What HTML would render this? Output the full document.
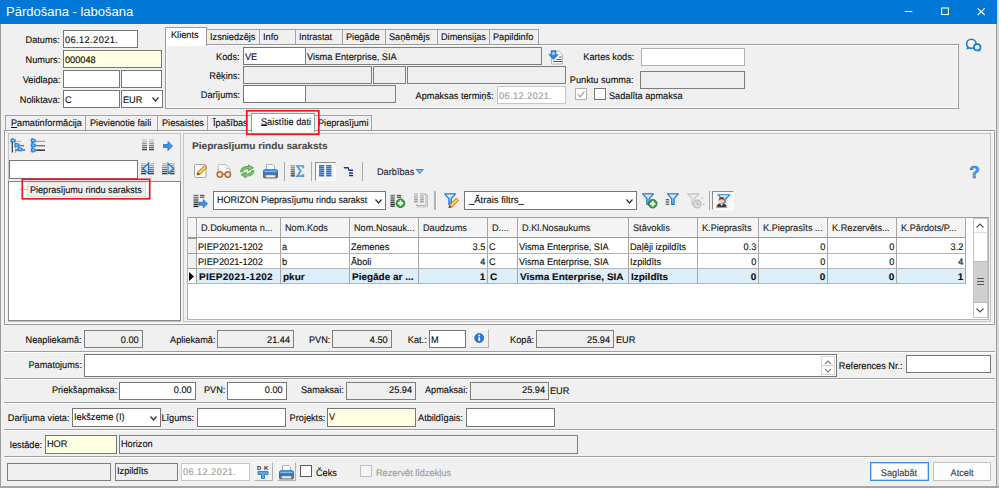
<!DOCTYPE html>
<html lang="lv"><head><meta charset="utf-8"><title>Pārdošana - labošana</title>
<style>
html,body{margin:0;padding:0}
body{width:999px;height:488px;overflow:hidden;position:relative;background:#f0f0f0;font-family:"Liberation Sans",sans-serif;font-size:11px;color:#111}
.a,.f,.t,.pn,.pn2,.tab,.cb,.btn,.red{position:absolute;box-sizing:border-box}
.f{background:#fff;border:1px solid #767676}
.f.g{background:#efefef;border-color:#7e7e7e}
.f.y{background:#ffffe1}
.f.d{background:#fff;border-color:#c6c6c6}
.t{white-space:nowrap;font-size:9.6px;margin-top:.7px;color:#0c0c0c;-webkit-text-stroke:.12px currentColor}
.t.b{font-weight:bold}
.t.dis{color:#9b9b9b}
.pn{border:1px solid #9a9a9a;background:#f0f0f0;box-shadow:inset 0 0 0 1px #fcfcfc}
.pn2{border:1px solid #c4c4c4;background:#f0f0f0}
.tab{border:1px solid #a3a3a3;border-bottom:none;background:#f0f0f0}
.tab.sel{background:#fff;border-color:#9a9a9a}
.cb{background:#fff;border:1px solid #5a5a5a}
.btn{background:#f0f0f0;border:1px solid;border-color:#fdfdfd #b2b2b2 #b2b2b2 #fdfdfd}
.btn2{position:absolute;box-sizing:border-box;background:#fdfdfd;border:1px solid #c2c2c2}
.red{border:2px solid #e8161f;background:none;z-index:9}
svg{overflow:visible}
</style></head>
<body>
<div class="a" style="left:0;top:0;width:999px;height:488px;background:#f0f0f0"></div>
<div class="a" style="left:0;top:0;width:999px;height:24px;background:#0078d7"></div>
<div class="a" style="left:6px;top:0;line-height:24px;font-size:13px;color:#fff;white-space:nowrap">Pārdošana - labošana</div>
<svg class="a" style="left:905px;top:11px" width="8" height="2" viewBox="0 0 8 2"><rect x="0" y="0" width="7.300" height="1" fill="#fff"/></svg>
<svg class="a" style="left:941px;top:7px" width="9" height="9" viewBox="0 0 9 9"><rect x=".6" y="1" width="6.800" height="6.500" fill="none" stroke="#fff" stroke-width="1.100"/></svg>
<svg class="a" style="left:977px;top:8px" width="9" height="8" viewBox="0 0 9 8"><path d="M.7 .4L7.700 7M7.700 .4L.7 7" stroke="#fff" stroke-width="1.150" fill="none"/></svg>
<div class="a" style="left:0;top:24px;width:1px;height:464px;background:#9c9c9c"></div>
<div class="a" style="left:997px;top:0;width:2px;height:488px;background:#dadada"></div>
<div class="a" style="left:996px;top:24px;width:1px;height:464px;background:#9a9a9a"></div>
<div class="a" style="left:0;top:486px;width:999px;height:2px;background:#a6a6a6"></div>
<div class="t" style="right:939px;top:30px;line-height:18px;transform:scaleX(0.957) rotate(.03deg);transform-origin:100% 0;">Datums:</div>
<div class="t" style="right:939px;top:50px;line-height:18px;transform:scaleX(0.957) rotate(.03deg);transform-origin:100% 0;">Numurs:</div>
<div class="t" style="right:939px;top:70px;line-height:18px;transform:scaleX(0.957) rotate(.03deg);transform-origin:100% 0;">Veidlapa:</div>
<div class="t" style="right:939px;top:90px;line-height:18px;transform:scaleX(0.957) rotate(.03deg);transform-origin:100% 0;">Noliktava:</div>
<div class="f" style="left:63px;top:30px;width:75px;height:18px;"></div>
<div class="t" style="left:65px;top:30px;line-height:18px;transform:scaleX(0.957) rotate(.03deg);transform-origin:0 0;letter-spacing:.45px">06.12.2021.</div>
<div class="f y" style="left:63px;top:50px;width:99px;height:18px;"></div>
<div class="t" style="left:65px;top:50px;line-height:18px;transform:scaleX(0.957) rotate(.03deg);transform-origin:0 0;">000048</div>
<div class="f" style="left:63px;top:70px;width:57px;height:18px;"></div>
<div class="f" style="left:121px;top:70px;width:41px;height:18px;"></div>
<div class="f" style="left:63px;top:90px;width:57px;height:18px;"></div>
<div class="t" style="left:65px;top:90px;line-height:18px;transform:scaleX(0.957) rotate(.03deg);transform-origin:0 0;">C</div>
<div class="f" style="left:121px;top:90px;width:42px;height:18px;"></div>
<div class="t" style="left:123px;top:90px;line-height:18px;transform:scaleX(0.957) rotate(.03deg);transform-origin:0 0;">EUR</div>
<svg class="a" style="left:152px;top:97px" width="7" height="5" viewBox="0 0 7 5"><path d="M0.5 0.5 L3.5 4 L6.5 0.5" fill="none" stroke="#333" stroke-width="1.3"/></svg>
<div class="pn" style="left:165px;top:44px;width:794px;height:65px;"></div>
<div class="tab" style="left:206px;top:29px;width:54px;height:15px;"></div>
<div class="t" style="left:210px;top:28px;line-height:15px;transform:scaleX(0.957) rotate(.03deg);transform-origin:0 0;">Izsniedzējs</div>
<div class="tab" style="left:259px;top:29px;width:37px;height:15px;"></div>
<div class="t" style="left:263px;top:28px;line-height:15px;transform:scaleX(0.957) rotate(.03deg);transform-origin:0 0;">Info</div>
<div class="tab" style="left:295px;top:29px;width:48px;height:15px;"></div>
<div class="t" style="left:299px;top:28px;line-height:15px;transform:scaleX(0.957) rotate(.03deg);transform-origin:0 0;">Intrastat</div>
<div class="tab" style="left:342px;top:29px;width:44px;height:15px;"></div>
<div class="t" style="left:346px;top:28px;line-height:15px;transform:scaleX(0.957) rotate(.03deg);transform-origin:0 0;">Piegāde</div>
<div class="tab" style="left:385px;top:29px;width:53px;height:15px;"></div>
<div class="t" style="left:389px;top:28px;line-height:15px;transform:scaleX(0.957) rotate(.03deg);transform-origin:0 0;">Saņēmējs</div>
<div class="tab" style="left:437px;top:29px;width:53px;height:15px;"></div>
<div class="t" style="left:441px;top:28px;line-height:15px;transform:scaleX(0.957) rotate(.03deg);transform-origin:0 0;">Dimensijas</div>
<div class="tab" style="left:489px;top:29px;width:50px;height:15px;"></div>
<div class="t" style="left:493px;top:28px;line-height:15px;transform:scaleX(0.957) rotate(.03deg);transform-origin:0 0;">Papildinfo</div>
<div class="tab sel" style="left:165px;top:27px;width:42px;height:19px;"></div>
<div class="t" style="left:171px;top:25.5px;line-height:17px;transform:scaleX(0.957) rotate(.03deg);transform-origin:0 0;">Klients</div>
<div class="t" style="right:759px;top:47px;line-height:18px;transform:scaleX(0.957) rotate(.03deg);transform-origin:100% 0;">Kods:</div>
<div class="t" style="right:759px;top:66px;line-height:18px;transform:scaleX(0.957) rotate(.03deg);transform-origin:100% 0;">Rēķins:</div>
<div class="t" style="right:759px;top:85px;line-height:18px;transform:scaleX(0.957) rotate(.03deg);transform-origin:100% 0;">Darījums:</div>
<div class="f" style="left:243px;top:47px;width:63px;height:18px;"></div>
<div class="t" style="left:245px;top:47px;line-height:18px;transform:scaleX(0.957) rotate(.03deg);transform-origin:0 0;">VE</div>
<div class="f g" style="left:305px;top:47px;width:237px;height:18px;"></div>
<div class="t" style="left:307px;top:47px;line-height:18px;transform:scaleX(0.957) rotate(.03deg);transform-origin:0 0;">Visma Enterprise, SIA</div>
<div class="f g" style="left:243px;top:66px;width:129px;height:18px;"></div>
<div class="f g" style="left:373px;top:66px;width:33px;height:18px;"></div>
<div class="f g" style="left:407px;top:66px;width:159px;height:18px;"></div>
<div class="f" style="left:243px;top:85px;width:63px;height:18px;"></div>
<div class="f g" style="left:305px;top:85px;width:91px;height:18px;"></div>
<div class="t" style="right:505px;top:86px;line-height:18px;transform:scaleX(0.957) rotate(.03deg);transform-origin:100% 0;">Apmaksas termiņš:</div>
<div class="f d" style="left:497px;top:86px;width:69px;height:18px;"></div>
<div class="t dis" style="left:499px;top:86px;line-height:18px;transform:scaleX(0.957) rotate(.03deg);transform-origin:0 0;letter-spacing:.45px">06.12.2021.</div>
<div class="t" style="right:365px;top:47px;line-height:18px;transform:scaleX(0.957) rotate(.03deg);transform-origin:100% 0;">Kartes kods:</div>
<div class="t" style="right:365px;top:70px;line-height:18px;transform:scaleX(0.957) rotate(.03deg);transform-origin:100% 0;">Punktu summa:</div>
<div class="f" style="left:641px;top:48px;width:104px;height:18px;border-color:#b2b2b2"></div>
<div class="f g" style="left:640px;top:71px;width:105px;height:18px;"></div>
<div class="cb" style="left:575px;top:88px;width:12px;height:12px;border-color:#b0b0b0"></div>
<svg class="a" style="left:577px;top:90px" width="9" height="9" viewBox="0 0 9 9"><path d="M1 4.300L3.300 6.800L7.500 1.300" fill="none" stroke="#9a9a9a" stroke-width="1.100"/></svg>
<div class="cb" style="left:594px;top:88px;width:12px;height:12px;border-color:#777"></div>
<div class="t" style="left:609px;top:86px;line-height:18px;transform:scaleX(0.957) rotate(.03deg);transform-origin:0 0;">Sadalīta apmaksa</div>
<svg class="a" style="left:548px;top:50px" width="16" height="15" viewBox="0 0 16 15"><path d="M3.500 1h7.500l3.500 3.500v9.500h-11z" fill="#fcfcfc" stroke="#b4b4b4" stroke-width="1"/><path d="M5 11.500h9M8.500 9.500h5M11 7h2.500" stroke="#555" stroke-width="1.100"/><path d="M3 .8h5v3.700h2.200l-4.700 5.300l-4.700-5.300h2.200z" fill="#2f86dc" stroke="#1f6fc4" stroke-width=".6"/><path d="M4.200 2h2.600v3h-2.600z" fill="#9fd0fb"/></svg>
<svg class="a" style="left:966px;top:38px" width="16" height="14" viewBox="0 0 16 14"><ellipse cx="5.300" cy="5.700" rx="4.700" ry="4.500" fill="none" stroke="#1a7ad4" stroke-width="1.600"/><path d="M1.300 8.300l-1 3.200l4.200-1.300z" fill="#1a7ad4"/><ellipse cx="11.200" cy="9.300" rx="3.300" ry="3.200" fill="#f0f0f0" stroke="#1a7ad4" stroke-width="1.600"/><path d="M13 11.600l2 1.900l-4-.6z" fill="#1a7ad4"/></svg>
<div class="pn" style="left:4px;top:130px;width:991px;height:195px;"></div>
<div class="tab" style="left:5px;top:115px;width:81px;height:15px;"></div>
<div class="t" style="left:11px;top:114.5px;line-height:15px;transform:scaleX(0.957) rotate(.03deg);transform-origin:0 0;">Pamatinformācija</div>
<div class="tab" style="left:85px;top:115px;width:73px;height:15px;"></div>
<div class="t" style="left:90px;top:114.5px;line-height:15px;transform:scaleX(0.957) rotate(.03deg);transform-origin:0 0;">Pievienotie faili</div>
<div class="tab" style="left:157px;top:115px;width:51px;height:15px;"></div>
<div class="t" style="left:162px;top:114.5px;line-height:15px;transform:scaleX(0.957) rotate(.03deg);transform-origin:0 0;">Piesaistes</div>
<div class="tab" style="left:207px;top:115px;width:45px;height:15px;"></div>
<div class="t" style="left:213px;top:114.5px;line-height:15px;transform:scaleX(0.957) rotate(.03deg);transform-origin:0 0;">Īpašības</div>
<div class="tab" style="left:313px;top:115px;width:59px;height:15px;"></div>
<div class="t" style="left:318px;top:114.5px;line-height:15px;transform:scaleX(0.957) rotate(.03deg);transform-origin:0 0;">Pieprasījumi</div>
<div class="tab sel" style="left:251px;top:113px;width:64px;height:19px;"></div>
<div class="t" style="left:261px;top:112px;line-height:18px;transform:scaleX(0.957) rotate(.03deg);transform-origin:0 0;">Saistītie dati</div>
<div class="a" style="left:11px;top:126.500px;width:5.500px;height:1px;background:#111"></div>
<div class="a" style="left:261px;top:124.500px;width:5.500px;height:1px;background:#111;z-index:3"></div>
<svg class="a" style="left:0;top:0;z-index:9;pointer-events:none" width="999" height="488"><rect x="246.800" y="110.800" width="72" height="23.500" fill="none" stroke="#ea1620" stroke-width="1.700"/><rect x="22.300" y="179.300" width="127.400" height="19.500" fill="none" stroke="#ea1620" stroke-width="1.700"/></svg>
<div class="pn2" style="left:8px;top:133px;width:173px;height:189px;"></div>
<svg class="a" style="left:10px;top:138px" width="16" height="15" viewBox="0 0 16 15"><path d="M2.300 4v10.500" stroke="#222" stroke-width="1.100"/><path d="M5.700 8.500v6" stroke="#555" stroke-width="1" stroke-dasharray="1.500 1"/><path d="M6.500 3.300h4.500" stroke="#aaa" stroke-width="1"/><path d="M9.700 7.700h4.300" stroke="#777" stroke-width="1.500"/><path d="M5.700 12h2M13 12h2" stroke="#555" stroke-width="1.300"/><path d="M0.8 1.3l.7-.8h1.600l.7.800h1.600v3h-4.600z" fill="#2f86dc" stroke="#2a7fd6" stroke-width=".5"/><rect x="1.9000000000000001" y="2.0" width="2.200" height=".9" fill="#bfe0fb"/><path d="M4.7 5.8l.7-.8h1.600l.7.800h1.600v3h-4.600z" fill="#2f86dc" stroke="#2a7fd6" stroke-width=".5"/><rect x="5.800000000000001" y="6.5" width="2.200" height=".9" fill="#bfe0fb"/><path d="M7.7 10.100000000000001l.7-.8h1.600l.7.800h1.600v3h-4.600z" fill="#2f86dc" stroke="#2a7fd6" stroke-width=".5"/><rect x="8.8" y="10.8" width="2.200" height=".9" fill="#bfe0fb"/></svg>
<svg class="a" style="left:30px;top:138px" width="16" height="15" viewBox="0 0 16 15"><path d="M6.200 3.300h8.800" stroke="#9a9a9a" stroke-width="1.100"/><path d="M6.200 7.700h8.800" stroke="#6a6a6a" stroke-width="1.300"/><path d="M6.200 12.200h8.800" stroke="#333" stroke-width="1.500"/><path d="M2.300 3v11.500" stroke="#333" stroke-width="1"/><path d="M1 1.3l.7-.8h1.600l.7.800h1.600v3h-4.600z" fill="#2f86dc" stroke="#2a7fd6" stroke-width=".5"/><rect x="2.1" y="2.0" width="2.200" height=".9" fill="#bfe0fb"/><path d="M1 6.0l.7-.8h1.600l.7.800h1.600v3h-4.600z" fill="#2f86dc" stroke="#2a7fd6" stroke-width=".5"/><rect x="2.1" y="6.7" width="2.200" height=".9" fill="#bfe0fb"/><path d="M1 10.8l.7-.8h1.600l.7.800h1.600v3h-4.600z" fill="#2f86dc" stroke="#2a7fd6" stroke-width=".5"/><rect x="2.1" y="11.5" width="2.200" height=".9" fill="#bfe0fb"/></svg>
<svg class="a" style="left:141px;top:138px" width="14" height="14" viewBox="0 0 14 14"><rect x="1" y="1" width="5" height="1.3" fill="rgb(205,205,205)"/><rect x="1" y="3" width="5" height="1.3" fill="rgb(178,178,178)"/><rect x="1" y="5" width="5" height="1.3" fill="rgb(151,151,151)"/><rect x="1" y="7" width="5" height="1.3" fill="rgb(124,124,124)"/><rect x="1" y="9" width="5" height="1.3" fill="rgb(97,97,97)"/><rect x="1" y="11" width="5" height="1.3" fill="rgb(70,70,70)"/><rect x="8" y="1" width="5" height="1.3" fill="rgb(205,205,205)"/><rect x="8" y="3" width="5" height="1.3" fill="rgb(178,178,178)"/><rect x="8" y="5" width="5" height="1.3" fill="rgb(151,151,151)"/><rect x="8" y="7" width="5" height="1.3" fill="rgb(124,124,124)"/><rect x="8" y="9" width="5" height="1.3" fill="rgb(97,97,97)"/><rect x="8" y="11" width="5" height="1.3" fill="rgb(70,70,70)"/></svg>
<svg class="a" style="left:163px;top:141px" width="10" height="10" viewBox="0 0 10 10"><path d="M0.5 3.5h4.5v-3l4.5 4.5l-4.5 4.5v-3h-4.5z" fill="#3d93e6" stroke="#1f6fc4" stroke-width=".8"/></svg>
<div class="f" style="left:9px;top:160px;width:129px;height:19px;"></div>
<svg class="a" style="left:141px;top:162px" width="14" height="14" viewBox="0 0 14 14"><rect x="0" y="1" width="5" height="1.3" fill="rgb(190,190,190)"/><rect x="0" y="3" width="5" height="1.3" fill="rgb(164,164,164)"/><rect x="0" y="5" width="5" height="1.3" fill="rgb(138,138,138)"/><rect x="0" y="7" width="5" height="1.3" fill="rgb(112,112,112)"/><rect x="0" y="9" width="5" height="1.3" fill="rgb(86,86,86)"/><rect x="0" y="11" width="5" height="1.3" fill="rgb(60,60,60)"/><rect x="8" y="1" width="5" height="1.3" fill="rgb(190,190,190)"/><rect x="8" y="3" width="5" height="1.3" fill="rgb(164,164,164)"/><rect x="8" y="5" width="5" height="1.3" fill="rgb(138,138,138)"/><rect x="8" y="7" width="5" height="1.3" fill="rgb(112,112,112)"/><rect x="8" y="9" width="5" height="1.3" fill="rgb(86,86,86)"/><rect x="8" y="11" width="5" height="1.3" fill="rgb(60,60,60)"/><path d="M7.500 1.300v10.400L2 6.500z" fill="#cfe6fb" stroke="#1f6fc4" stroke-width="1.100"/></svg>
<svg class="a" style="left:161px;top:162px" width="14" height="14" viewBox="0 0 14 14"><rect x="1" y="1" width="5" height="1.3" fill="rgb(190,190,190)"/><rect x="1" y="3" width="5" height="1.3" fill="rgb(164,164,164)"/><rect x="1" y="5" width="5" height="1.3" fill="rgb(138,138,138)"/><rect x="1" y="7" width="5" height="1.3" fill="rgb(112,112,112)"/><rect x="1" y="9" width="5" height="1.3" fill="rgb(86,86,86)"/><rect x="1" y="11" width="5" height="1.3" fill="rgb(60,60,60)"/><rect x="8.5" y="1" width="5" height="1.3" fill="rgb(190,190,190)"/><rect x="8.5" y="3" width="5" height="1.3" fill="rgb(164,164,164)"/><rect x="8.5" y="5" width="5" height="1.3" fill="rgb(138,138,138)"/><rect x="8.5" y="7" width="5" height="1.3" fill="rgb(112,112,112)"/><rect x="8.5" y="9" width="5" height="1.3" fill="rgb(86,86,86)"/><rect x="8.5" y="11" width="5" height="1.3" fill="rgb(60,60,60)"/><path d="M7 1.300v10.400l5.500-5.200z" fill="#cfe6fb" stroke="#1f6fc4" stroke-width="1.100"/></svg>
<div class="f" style="left:8px;top:181px;width:173px;height:140px;border-color:#828790"></div>
<div class="a" style="left:20px;top:189px;width:7px;height:0;border-top:1px dotted #999"></div>
<div class="a" style="left:27px;top:182px;width:119px;height:15px;background:#efefef;border:1px solid #dcdcdc;box-sizing:border-box"></div>
<div class="t" style="left:29.5px;top:181px;line-height:15px;transform:scaleX(0.957) rotate(.03deg);transform-origin:0 0;transform:scaleX(.945) rotate(.03deg)">Pieprasījumu rindu saraksts</div>
<div class="pn2" style="left:183px;top:133px;width:808px;height:189px;"></div>
<div class="t b" style="left:192px;top:137px;line-height:16px;transform:scaleX(1.04) rotate(.03deg);transform-origin:0 0;color:#4b4b4b;transform:scaleX(1.055) rotate(.03deg)">Pieprasījumu rindu saraksts</div>
<svg class="a" style="left:194px;top:164px" width="15" height="15" viewBox="0 0 15 15"><rect x=".5" y=".5" width="11.500" height="13" rx="1.200" fill="#fcfcfc" stroke="#a4a4a4"/><g transform="translate(3,1.500)"><path d="M0 9.500l.9-3.100l6.600-6.400l2.300 2.300l-6.600 6.400z" fill="#f7bd3a" stroke="#c56a18" stroke-width=".9"/><path d="M0 9.500l.8-2.600l1.900 1.900z" fill="#5a2d0c"/><path d="M2.500 7.300l5.500-5.400" stroke="#fde9a0" stroke-width=".9"/></g></svg>
<svg class="a" style="left:215px;top:164px" width="18" height="15" viewBox="0 0 18 15"><path d="M3.200 10v-9.500h7.800l4 4v5.500" fill="#fbfbfb" stroke="#bdbdbd"/><path d="M11 .5v4h4" fill="none" stroke="#cfcfcf"/><circle cx="4.800" cy="10.500" r="2.700" fill="#dbe7f3" stroke="#c7651a" stroke-width="1.500"/><circle cx="12.800" cy="10.500" r="2.700" fill="#dbe7f3" stroke="#c7651a" stroke-width="1.500"/><path d="M7.800 10.200h2" stroke="#c7651a" stroke-width="1.500"/></svg>
<svg class="a" style="left:240px;top:164px" width="15" height="15" viewBox="0 0 15 15"><path d="M1.700 8.300C1.800 4.600 5 3.200 9 3.700" stroke="#4f9e45" stroke-width="3.200" fill="none"/><path d="M8.200 .2l5.800 3.600l-5.800 3.500z" fill="#4f9e45"/><path d="M1.700 8.300C1.800 4.600 5 3.200 9 3.700" stroke="#7cc66e" stroke-width="1.800" fill="none"/><path d="M8.900 1.600l3.600 2.200l-3.600 2.100z" fill="#7cc66e"/><g transform="rotate(180 7.250 7.300)"><path d="M1.700 8.300C1.800 4.600 5 3.200 9 3.700" stroke="#4f9e45" stroke-width="3.200" fill="none"/><path d="M8.200 .2l5.800 3.600l-5.800 3.500z" fill="#4f9e45"/><path d="M1.700 8.300C1.800 4.600 5 3.200 9 3.700" stroke="#7cc66e" stroke-width="1.800" fill="none"/><path d="M8.900 1.600l3.600 2.200l-3.600 2.100z" fill="#7cc66e"/></g></svg>
<svg class="a" style="left:263px;top:164px" width="15" height="15" viewBox="0 0 15 15"><path d="M3.500 .5h6.500l1.500 1.500v4.500h-8z" fill="#fafcfe" stroke="#aab4bf"/><path d="M.5 7.200q0-1.500 1.500-1.500h11q1.500 0 1.500 1.500v3.300h-14z" fill="#2f86dc" stroke="#1b5fa8" stroke-width=".8"/><path d="M1.500 7.300h12" stroke="#8cc6f5" stroke-width="1.200"/><path d="M.5 10h14v3q0 1-1 1h-12q-1 0-1-1z" fill="#6b7888" stroke="#4d5866" stroke-width=".8"/><path d="M2.800 11h9.400v2.500h-9.400z" fill="#e9eef3" stroke="#8b97a4" stroke-width=".6"/></svg>
<div class="a" style="left:284px;top:162px;width:1px;height:19px;background:#a8a8a8"></div>
<svg class="a" style="left:290px;top:165px" width="15" height="13" viewBox="0 0 15 13"><rect x="0.7" y="0.2" width="4.3" height="1.3" fill="rgb(150,150,150)"/><rect x="0.7" y="2.2" width="4.3" height="1.3" fill="rgb(130,130,130)"/><rect x="0.7" y="4.2" width="4.3" height="1.3" fill="rgb(110,110,110)"/><rect x="0.7" y="6.2" width="4.3" height="1.3" fill="rgb(90,90,90)"/><rect x="0.7" y="8.2" width="4.3" height="1.3" fill="rgb(70,70,70)"/><rect x="0.7" y="10.2" width="4.3" height="1.3" fill="rgb(50,50,50)"/><path d="M13.300 3.300V1H7.200l3.500 5.100L7.200 11.200h6.100V8.900" fill="none" stroke="#2f82d8" stroke-width="1.700" stroke-linejoin="miter"/><path d="M13.300 3.300V1H7.200l3.500 5.100L7.200 11.200h6.100V8.900" fill="none" stroke="#a6d0f7" stroke-width=".5"/></svg>
<div class="a" style="left:311px;top:162px;width:1px;height:19px;background:#a8a8a8"></div>
<div class="a" style="left:315px;top:162px;width:21px;height:19px;background:#f7f7f7;border:1px solid;border-color:#8e8e8e #fff #fff #8e8e8e;box-sizing:border-box"></div>
<svg class="a" style="left:319px;top:165px" width="13" height="13" viewBox="0 0 13 13"><rect x="0" y="0" width="5.2" height="11.4" fill="#b9d3f1"/><rect x="0" y="0" width="5.2" height="1.400" fill="#2a6cc4"/><rect x="0" y="2" width="5.2" height="1.400" fill="#2a6cc4"/><rect x="0" y="4" width="5.2" height="1.400" fill="#2a6cc4"/><rect x="0" y="6" width="5.2" height="1.400" fill="#2a6cc4"/><rect x="0" y="8" width="5.2" height="1.400" fill="#2a6cc4"/><rect x="0" y="10" width="5.2" height="1.400" fill="#2a6cc4"/><rect x="7.2" y="0" width="5.2" height="11.4" fill="#b9d3f1"/><rect x="7.2" y="0" width="5.2" height="1.400" fill="#2a6cc4"/><rect x="7.2" y="2" width="5.2" height="1.400" fill="#2a6cc4"/><rect x="7.2" y="4" width="5.2" height="1.400" fill="#2a6cc4"/><rect x="7.2" y="6" width="5.2" height="1.400" fill="#2a6cc4"/><rect x="7.2" y="8" width="5.2" height="1.400" fill="#2a6cc4"/><rect x="7.2" y="10" width="5.2" height="1.400" fill="#2a6cc4"/></svg>
<svg class="a" style="left:343px;top:166px" width="12" height="11" viewBox="0 0 12 11"><path d="M.8 1.700h4.700M6 4.300h4M6 7h4M6 9.600h4" stroke="#17309c" stroke-width="1.500"/><path d="M5.500 1.700v2.600h1" stroke="#17309c" stroke-width="1" fill="none"/></svg>
<div class="a" style="left:362px;top:162px;width:1px;height:19px;background:#a8a8a8"></div>
<div class="t" style="left:377px;top:161px;line-height:19px;transform:scaleX(0.957) rotate(.03deg);transform-origin:0 0;color:#15203a">Darbības</div>
<svg class="a" style="left:416px;top:169px" width="8" height="5" viewBox="0 0 8 5"><path d="M.6 .6h6.300l-3.150 3.600z" fill="#bcdcf8" stroke="#2f86dc" stroke-width="1.100"/></svg>
<svg class="a" style="left:969px;top:164px" width="11" height="15" viewBox="0 0 11 15"><text x="5.400" y="13.800" text-anchor="middle" font-family="Liberation Sans, sans-serif" font-weight="bold" font-size="17" fill="#4f9fe8" stroke="#1f6fc4" stroke-width=".55">?</text></svg>
<svg class="a" style="left:193px;top:194px" width="15" height="14" viewBox="0 0 15 14"><rect x="0.5" y="0.8" width="5" height="1.2" fill="rgb(120,120,120)"/><rect x="0.5" y="2.6500000000000004" width="5" height="1.2" fill="rgb(105,105,105)"/><rect x="0.5" y="4.5" width="5" height="1.2" fill="rgb(90,90,90)"/><rect x="0.5" y="6.3500000000000005" width="5" height="1.2" fill="rgb(75,75,75)"/><rect x="0.5" y="8.200000000000001" width="5" height="1.2" fill="rgb(60,60,60)"/><rect x="0.5" y="10.05" width="5" height="1.2" fill="rgb(45,45,45)"/><rect x="0.5" y="11.900000000000002" width="5" height="1.2" fill="rgb(30,30,30)"/><rect x="7" y=".8" width="4.500" height="1.200" fill="#555"/><rect x="7" y="2.650" width="4.500" height="1.200" fill="#555"/><g transform="translate(5.500,5) scale(.95)"><path d="M0.5 3.5h4.5v-3l4.5 4.5l-4.5 4.5v-3h-4.5z" fill="#3d93e6" stroke="#1f6fc4" stroke-width=".8"/></g></svg>
<div class="f" style="left:213px;top:191px;width:173px;height:19px;"></div>
<div class="t" style="left:217px;top:190.2px;line-height:18px;transform:scaleX(0.957) rotate(.03deg);transform-origin:0 0;transform:scaleX(.937) rotate(.03deg)">HORIZON Pieprasījumu rindu sarakst</div>
<svg class="a" style="left:375px;top:199px" width="7" height="5" viewBox="0 0 7 5"><path d="M0.5 0.5 L3.5 4 L6.5 0.5" fill="none" stroke="#333" stroke-width="1.3"/></svg>
<svg class="a" style="left:390px;top:194px" width="16" height="14" viewBox="0 0 16 14"><rect x="0.4" y="0.8" width="4.4" height="1.2" fill="rgb(110,110,110)"/><rect x="0.4" y="2.6" width="4.4" height="1.2" fill="rgb(96,96,96)"/><rect x="0.4" y="4.4" width="4.4" height="1.2" fill="rgb(83,83,83)"/><rect x="0.4" y="6.2" width="4.4" height="1.2" fill="rgb(70,70,70)"/><rect x="0.4" y="8.0" width="4.4" height="1.2" fill="rgb(56,56,56)"/><rect x="0.4" y="9.8" width="4.4" height="1.2" fill="rgb(43,43,43)"/><rect x="0.4" y="11.600000000000001" width="4.4" height="1.2" fill="rgb(30,30,30)"/><rect x="6.8" y="0.8" width="4.4" height="1.2" fill="rgb(90,90,90)"/><rect x="6.8" y="2.6" width="4.4" height="1.2" fill="rgb(60,60,60)"/><g transform="translate(10.500,9.200)"><circle cx="0" cy="0" r="4.300" fill="#3aa33a" stroke="#1f7a25" stroke-width=".9"/><path d="M0 -2.700v5.400M-2.700 0h5.400" stroke="#fff" stroke-width="1.900"/></g></svg>
<svg class="a" style="left:413px;top:192px" width="16" height="16" viewBox="0 0 16 16"><path d="M12 3h2.500v12h-10v-2" fill="none" stroke="#c2c2c2" stroke-width="1"/><path d="M11 2h2v11.500h-9.500v-1.500" fill="none" stroke="#b0b0b0" stroke-width="1"/><rect x="1" y="1" width="3.800" height="10" fill="#e3e3e3"/><rect x="7" y="1" width="3.800" height="10" fill="#e3e3e3"/><rect x="1" y="1.2" width="3.8" height="1.1" fill="rgb(190,190,190)"/><rect x="1" y="3.2" width="3.8" height="1.1" fill="rgb(177,177,177)"/><rect x="1" y="5.2" width="3.8" height="1.1" fill="rgb(165,165,165)"/><rect x="1" y="7.2" width="3.8" height="1.1" fill="rgb(152,152,152)"/><rect x="1" y="9.2" width="3.8" height="1.1" fill="rgb(140,140,140)"/><rect x="7" y="1.2" width="3.8" height="1.1" fill="rgb(190,190,190)"/><rect x="7" y="3.2" width="3.8" height="1.1" fill="rgb(177,177,177)"/><rect x="7" y="5.2" width="3.8" height="1.1" fill="rgb(165,165,165)"/><rect x="7" y="7.2" width="3.8" height="1.1" fill="rgb(152,152,152)"/><rect x="7" y="9.2" width="3.8" height="1.1" fill="rgb(140,140,140)"/></svg>
<div class="a" style="left:434px;top:191px;width:2px;height:19px;background:#b4b4b4;border-right:1px solid #fbfbfb;box-sizing:content-box"></div>
<svg class="a" style="left:444px;top:193px" width="16" height="16" viewBox="0 0 16 16"><defs><linearGradient id="fg" x1="0" y1="0" x2="0" y2="1"><stop offset="0" stop-color="#f6fbff"/><stop offset=".5" stop-color="#a6d3f8"/><stop offset="1" stop-color="#55a6ee"/></linearGradient></defs><path d="M.7 .9h10.800l-4.200 4.800v5.800h-2.400v-5.800z" fill="url(#fg)" stroke="#1f78d0" stroke-width="1.200" stroke-linejoin="round"/><g transform="translate(4.800,5.300)"><path d="M0 9.500l.9-3.100l6.600-6.400l2.300 2.300l-6.600 6.400z" fill="#f7bd3a" stroke="#c56a18" stroke-width=".9"/><path d="M0 9.500l.8-2.600l1.900 1.900z" fill="#5a2d0c"/><path d="M2.500 7.300l5.500-5.400" stroke="#fde9a0" stroke-width=".9"/></g></svg>
<div class="f" style="left:464px;top:191px;width:173px;height:19px;"></div>
<div class="t" style="left:468.5px;top:190.2px;line-height:18px;transform:scaleX(0.957) rotate(.03deg);transform-origin:0 0;transform:scaleX(.99) rotate(.03deg)">_Ātrais filtrs_</div>
<svg class="a" style="left:626px;top:199px" width="7" height="5" viewBox="0 0 7 5"><path d="M0.5 0.5 L3.5 4 L6.5 0.5" fill="none" stroke="#333" stroke-width="1.3"/></svg>
<svg class="a" style="left:642px;top:193px" width="16" height="16" viewBox="0 0 16 16"><path d="M.7 .9h10.800l-4.200 4.800v5.800h-2.400v-5.800z" fill="url(#fg)" stroke="#1f78d0" stroke-width="1.200" stroke-linejoin="round"/><g transform="translate(10.700,10.700)"><circle cx="0" cy="0" r="4.300" fill="#3aa33a" stroke="#1f7a25" stroke-width=".9"/><path d="M0 -2.700v5.400M-2.700 0h5.400" stroke="#fff" stroke-width="1.900"/></g></svg>
<svg class="a" style="left:665px;top:193px" width="14" height="13" viewBox="0 0 14 13"><g transform="translate(1.800,0)"><path d="M.7 .9h10.800l-4.200 4.800v5.800h-2.400v-5.800z" fill="url(#fg)" stroke="#1f78d0" stroke-width="1.200" stroke-linejoin="round"/></g><path d="M.8 6.800h3.400M.8 9h3.400M.8 11.200h3.400" stroke="#333" stroke-width="1.100"/></svg>
<svg class="a" style="left:687px;top:193px" width="18" height="16" viewBox="0 0 18 16"><path d="M.7 .9h11l-4.300 4.800v5.800h-2.400v-5.800z" fill="#ececec" stroke="#c2c2c2" stroke-width="1.100"/><circle cx="10.200" cy="11" r="3.900" fill="#dcdcdc" stroke="#bdbdbd" stroke-width="1.100"/><path d="M10.200 8.500v2.700h2" stroke="#b4b4b4" stroke-width="1" fill="none"/><path d="M14.500 5.800l1.600-1.600M15.800 11.500h1.700" stroke="#a8a8a8" stroke-width="1"/></svg>
<div class="a" style="left:709px;top:191px;width:1px;height:19px;background:#a8a8a8"></div>
<div class="a" style="left:712px;top:191px;width:22px;height:19px;background:#f8f8f8;border:1px solid;border-color:#8e8e8e #fff #fff #8e8e8e;box-sizing:border-box"></div>
<svg class="a" style="left:716px;top:194px" width="15" height="14" viewBox="0 0 15 14"><path d="M2.200 .8h11.400l-4.500 5v3h-2.400v-3z" fill="url(#fg)" stroke="#1f78d0" stroke-width="1.100"/><circle cx="5.600" cy="6.700" r="2.600" fill="#f6d3b0"/><path d="M2.700 7.200c-.3-3.400 1.200-4.300 2.900-4.300s3.200.9 2.900 4.300l-.9-1.800h-4z" fill="#8c3b16"/><path d="M.5 13.500c.2-3.300 1.800-4.300 5.100-4.300s4.900 1 5.100 4.300z" fill="#3c3c44"/><path d="M4 9.400l1.600 2.600l1.600-2.600z" fill="#f4f4f4"/><path d="M.5 13.500l.4-2.300l1.300 2.300zM10.700 13.500l-.4-2.300l-1.300 2.300z" fill="#f08a20"/></svg>
<div class="a" style="left:187px;top:217px;width:802px;height:103px;background:#fff;border:1px solid #b4b4b4;border-top-color:#9c9c9c;box-sizing:border-box"></div>
<div class="a" style="left:188px;top:218px;width:778px;height:20px;background:#f4f4f4;border-bottom:1px solid #9a9a9a;box-sizing:border-box"></div>
<div class="t" style="left:201px;top:217.5px;line-height:20px;transform:scaleX(0.957) rotate(.03deg);transform-origin:0 0;color:#222">D.Dokumenta n...</div>
<div class="t" style="left:285px;top:217.5px;line-height:20px;transform:scaleX(0.957) rotate(.03deg);transform-origin:0 0;color:#222">Nom.Kods</div>
<div class="t" style="left:354px;top:217.5px;line-height:20px;transform:scaleX(0.957) rotate(.03deg);transform-origin:0 0;color:#222">Nom.Nosauk...</div>
<div class="t" style="left:423px;top:217.5px;line-height:20px;transform:scaleX(0.957) rotate(.03deg);transform-origin:0 0;color:#222">Daudzums</div>
<div class="t" style="left:492px;top:217.5px;line-height:20px;transform:scaleX(0.957) rotate(.03deg);transform-origin:0 0;color:#222">D....</div>
<div class="t" style="left:522px;top:217.5px;line-height:20px;transform:scaleX(0.957) rotate(.03deg);transform-origin:0 0;color:#222">D.Kl.Nosaukums</div>
<div class="t" style="left:633px;top:217.5px;line-height:20px;transform:scaleX(0.957) rotate(.03deg);transform-origin:0 0;color:#222">Stāvoklis</div>
<div class="t" style="left:702px;top:217.5px;line-height:20px;transform:scaleX(0.957) rotate(.03deg);transform-origin:0 0;color:#222">K.Pieprasīts</div>
<div class="t" style="left:763px;top:217.5px;line-height:20px;transform:scaleX(0.957) rotate(.03deg);transform-origin:0 0;color:#222">K.Pieprasīts ...</div>
<div class="t" style="left:832px;top:217.5px;line-height:20px;transform:scaleX(0.957) rotate(.03deg);transform-origin:0 0;color:#222">K.Rezervēts...</div>
<div class="t" style="left:901px;top:217.5px;line-height:20px;transform:scaleX(0.957) rotate(.03deg);transform-origin:0 0;color:#222">K.Pārdots/P...</div>
<div class="a" style="left:188px;top:238px;width:8px;height:31px;background:#f0f0f0"></div>
<div class="a" style="left:197px;top:269px;width:768px;height:15px;background:#ddeefb"></div>
<div class="t" style="left:198px;top:238px;line-height:15px;transform:scaleX(0.957) rotate(.03deg);transform-origin:0 0;">PIEP2021-1202</div>
<div class="t" style="left:282px;top:238px;line-height:15px;transform:scaleX(0.957) rotate(.03deg);transform-origin:0 0;">a</div>
<div class="t" style="left:351px;top:238px;line-height:15px;transform:scaleX(0.957) rotate(.03deg);transform-origin:0 0;">Zemenes</div>
<div class="t" style="right:514px;top:238px;line-height:15px;transform:scaleX(0.957) rotate(.03deg);transform-origin:100% 0;">3.5</div>
<div class="t" style="left:489px;top:238px;line-height:15px;transform:scaleX(0.957) rotate(.03deg);transform-origin:0 0;">C</div>
<div class="t" style="left:519px;top:238px;line-height:15px;transform:scaleX(0.957) rotate(.03deg);transform-origin:0 0;">Visma Enterprise, SIA</div>
<div class="t" style="left:630px;top:238px;line-height:15px;transform:scaleX(0.957) rotate(.03deg);transform-origin:0 0;">Daļēji izpildīts</div>
<div class="t" style="right:243px;top:238px;line-height:15px;transform:scaleX(0.957) rotate(.03deg);transform-origin:100% 0;">0.3</div>
<div class="t" style="right:174px;top:238px;line-height:15px;transform:scaleX(0.957) rotate(.03deg);transform-origin:100% 0;">0</div>
<div class="t" style="right:105px;top:238px;line-height:15px;transform:scaleX(0.957) rotate(.03deg);transform-origin:100% 0;">0</div>
<div class="t" style="right:36px;top:238px;line-height:15px;transform:scaleX(0.957) rotate(.03deg);transform-origin:100% 0;">3.2</div>
<div class="t" style="left:198px;top:253px;line-height:15px;transform:scaleX(0.957) rotate(.03deg);transform-origin:0 0;">PIEP2021-1202</div>
<div class="t" style="left:282px;top:253px;line-height:15px;transform:scaleX(0.957) rotate(.03deg);transform-origin:0 0;">b</div>
<div class="t" style="left:351px;top:253px;line-height:15px;transform:scaleX(0.957) rotate(.03deg);transform-origin:0 0;">Āboli</div>
<div class="t" style="right:514px;top:253px;line-height:15px;transform:scaleX(0.957) rotate(.03deg);transform-origin:100% 0;">4</div>
<div class="t" style="left:489px;top:253px;line-height:15px;transform:scaleX(0.957) rotate(.03deg);transform-origin:0 0;">C</div>
<div class="t" style="left:519px;top:253px;line-height:15px;transform:scaleX(0.957) rotate(.03deg);transform-origin:0 0;">Visma Enterprise, SIA</div>
<div class="t" style="left:630px;top:253px;line-height:15px;transform:scaleX(0.957) rotate(.03deg);transform-origin:0 0;">Izpildīts</div>
<div class="t" style="right:243px;top:253px;line-height:15px;transform:scaleX(0.957) rotate(.03deg);transform-origin:100% 0;">0</div>
<div class="t" style="right:174px;top:253px;line-height:15px;transform:scaleX(0.957) rotate(.03deg);transform-origin:100% 0;">0</div>
<div class="t" style="right:105px;top:253px;line-height:15px;transform:scaleX(0.957) rotate(.03deg);transform-origin:100% 0;">0</div>
<div class="t" style="right:36px;top:253px;line-height:15px;transform:scaleX(0.957) rotate(.03deg);transform-origin:100% 0;">4</div>
<div class="t b" style="left:199px;top:268px;line-height:15px;transform:scaleX(1.04) rotate(.03deg);transform-origin:0 0;letter-spacing:.25px">PIEP2021-1202</div>
<div class="t b" style="left:283px;top:268px;line-height:15px;transform:scaleX(1.04) rotate(.03deg);transform-origin:0 0;">pkur</div>
<div class="t b" style="left:352px;top:268px;line-height:15px;transform:scaleX(1.04) rotate(.03deg);transform-origin:0 0;">Piegāde ar ...</div>
<div class="t b" style="right:514px;top:268px;line-height:15px;transform:scaleX(1.04) rotate(.03deg);transform-origin:100% 0;">1</div>
<div class="t b" style="left:490px;top:268px;line-height:15px;transform:scaleX(1.04) rotate(.03deg);transform-origin:0 0;">C</div>
<div class="t b" style="left:520px;top:268px;line-height:15px;transform:scaleX(1.04) rotate(.03deg);transform-origin:0 0;">Visma Enterprise, SIA</div>
<div class="t b" style="left:631px;top:268px;line-height:15px;transform:scaleX(1.04) rotate(.03deg);transform-origin:0 0;">Izpildīts</div>
<div class="t b" style="right:243px;top:268px;line-height:15px;transform:scaleX(1.04) rotate(.03deg);transform-origin:100% 0;">0</div>
<div class="t b" style="right:174px;top:268px;line-height:15px;transform:scaleX(1.04) rotate(.03deg);transform-origin:100% 0;">0</div>
<div class="t b" style="right:105px;top:268px;line-height:15px;transform:scaleX(1.04) rotate(.03deg);transform-origin:100% 0;">0</div>
<div class="t b" style="right:36px;top:268px;line-height:15px;transform:scaleX(1.04) rotate(.03deg);transform-origin:100% 0;">1</div>
<div class="a" style="left:196px;top:218px;width:1px;height:66px;background:#a6a6a6"></div>
<div class="a" style="left:280px;top:218px;width:1px;height:66px;background:#a6a6a6"></div>
<div class="a" style="left:349px;top:218px;width:1px;height:66px;background:#a6a6a6"></div>
<div class="a" style="left:418px;top:218px;width:1px;height:66px;background:#a6a6a6"></div>
<div class="a" style="left:487px;top:218px;width:1px;height:66px;background:#a6a6a6"></div>
<div class="a" style="left:517px;top:218px;width:1px;height:66px;background:#a6a6a6"></div>
<div class="a" style="left:628px;top:218px;width:1px;height:66px;background:#a6a6a6"></div>
<div class="a" style="left:697px;top:218px;width:1px;height:66px;background:#a6a6a6"></div>
<div class="a" style="left:758px;top:218px;width:1px;height:66px;background:#a6a6a6"></div>
<div class="a" style="left:827px;top:218px;width:1px;height:66px;background:#a6a6a6"></div>
<div class="a" style="left:896px;top:218px;width:1px;height:66px;background:#a6a6a6"></div>
<div class="a" style="left:965px;top:218px;width:1px;height:66px;background:#a6a6a6"></div>
<div class="a" style="left:188px;top:253px;width:778px;height:1px;background:#b4b4b4"></div>
<div class="a" style="left:188px;top:268px;width:778px;height:1px;background:#b4b4b4"></div>
<div class="a" style="left:188px;top:283px;width:778px;height:1px;background:#b4b4b4"></div>
<div class="a" style="left:188px;top:238px;width:9px;height:1px;background:#9c9c9c"></div>
<div class="a" style="left:188px;top:253px;width:9px;height:1px;background:#9c9c9c"></div>
<div class="a" style="left:188px;top:268px;width:9px;height:1px;background:#9c9c9c"></div>
<svg class="a" style="left:189px;top:272px" width="6" height="10" viewBox="0 0 6 10"><path d="M0 0l5 4.500l-5 4.500z" fill="#000"/></svg>
<div class="a" style="left:973px;top:218px;width:15px;height:100px;background:#fff;border:1px solid #c4c4c4;box-sizing:border-box"></div>
<div class="a" style="left:974px;top:261px;width:13px;height:42px;background:#cfcfcf;border-top:1px solid #b8b8b8;border-bottom:1px solid #b8b8b8"></div>
<div class="a" style="left:974px;top:232px;width:13px;height:1px;background:#dcdcdc"></div>
<svg class="a" style="left:976px;top:223px" width="8" height="5" viewBox="0 0 8 5"><path d="M.5 4.500L4 1L7.500 4.500" fill="none" stroke="#555" stroke-width="1.200"/></svg>
<svg class="a" style="left:976px;top:308px" width="8" height="5" viewBox="0 0 8 5"><path d="M.5 .5L4 4L7.500 .5" fill="none" stroke="#555" stroke-width="1.200"/></svg>
<svg class="a" style="left:977px;top:278px" width="7" height="7" viewBox="0 0 7 7"><path d="M0 .5h7M0 3.500h7M0 6.500h7" stroke="#555" stroke-width="1"/></svg>
<div class="t" style="right:917px;top:330px;line-height:18px;transform:scaleX(0.957) rotate(.03deg);transform-origin:100% 0;">Neapliekamā:</div>
<div class="f g" style="left:84px;top:330px;width:59px;height:18px;"></div>
<div class="t" style="right:860px;top:330px;line-height:18px;transform:scaleX(0.957) rotate(.03deg);transform-origin:100% 0;">0.00</div>
<div class="t" style="right:784px;top:330px;line-height:18px;transform:scaleX(0.957) rotate(.03deg);transform-origin:100% 0;">Apliekamā:</div>
<div class="f g" style="left:217px;top:330px;width:77px;height:18px;"></div>
<div class="t" style="right:709px;top:330px;line-height:18px;transform:scaleX(0.957) rotate(.03deg);transform-origin:100% 0;">21.44</div>
<div class="t" style="right:669px;top:330px;line-height:18px;transform:scaleX(0.957) rotate(.03deg);transform-origin:100% 0;">PVN:</div>
<div class="f g" style="left:332px;top:330px;width:60px;height:18px;"></div>
<div class="t" style="right:611px;top:330px;line-height:18px;transform:scaleX(0.957) rotate(.03deg);transform-origin:100% 0;">4.50</div>
<div class="t" style="right:572px;top:330px;line-height:18px;transform:scaleX(0.957) rotate(.03deg);transform-origin:100% 0;">Kat.:</div>
<div class="f" style="left:429px;top:330px;width:37px;height:18px;"></div>
<div class="t" style="left:431px;top:330px;line-height:18px;transform:scaleX(0.957) rotate(.03deg);transform-origin:0 0;">M</div>
<div class="btn" style="left:470px;top:329px;width:19px;height:19px;"></div>
<svg class="a" style="left:474px;top:333px" width="10" height="10" viewBox="0 0 10 10"><circle cx="5.200" cy="5" r="4.500" fill="#2b78cf" stroke="#1b5fa8" stroke-width=".7"/><rect x="4.300" y="4.200" width="1.800" height="3.600" fill="#fff"/><rect x="4.300" y="1.800" width="1.800" height="1.500" fill="#fff"/></svg>
<div class="t" style="right:465px;top:330px;line-height:18px;transform:scaleX(0.957) rotate(.03deg);transform-origin:100% 0;">Kopā:</div>
<div class="f g" style="left:536px;top:330px;width:78px;height:18px;"></div>
<div class="t" style="right:389px;top:330px;line-height:18px;transform:scaleX(0.957) rotate(.03deg);transform-origin:100% 0;">25.94</div>
<div class="t" style="left:616px;top:330px;line-height:18px;transform:scaleX(0.957) rotate(.03deg);transform-origin:0 0;">EUR</div>
<div class="a" style="left:4px;top:351px;width:991px;height:2px;border-top:1px solid #a0a0a0;border-bottom:1px solid #fff;box-sizing:border-box"></div>
<div class="t" style="right:917px;top:355px;line-height:18px;transform:scaleX(0.957) rotate(.03deg);transform-origin:100% 0;">Pamatojums:</div>
<div class="f" style="left:84px;top:354px;width:753px;height:23px;"></div>
<svg class="a" style="left:821px;top:356px" width="14" height="19" viewBox="0 0 14 19"><rect x=".5" y=".5" width="13" height="18" fill="#fff" stroke="#d6d6d6"/><path d="M1 9.500h12" stroke="#d0d0d0"/><path d="M4 8l3-3l3 3M4 13l3 3l3-3" fill="none" stroke="#7e7e7e" stroke-width="1.100"/></svg>
<div class="t" style="right:96px;top:356px;line-height:18px;transform:scaleX(0.957) rotate(.03deg);transform-origin:100% 0;">References Nr.:</div>
<div class="f" style="left:906px;top:355px;width:85px;height:18px;"></div>
<div class="a" style="left:4px;top:378px;width:991px;height:2px;border-top:1px solid #a0a0a0;border-bottom:1px solid #fff;box-sizing:border-box"></div>
<div class="t" style="right:882px;top:380.8px;line-height:18px;transform:scaleX(0.957) rotate(.03deg);transform-origin:100% 0;">Priekšapmaksa:</div>
<div class="f" style="left:119px;top:382px;width:77px;height:18px;"></div>
<div class="t" style="right:807px;top:380.8px;line-height:18px;transform:scaleX(0.957) rotate(.03deg);transform-origin:100% 0;">0.00</div>
<div class="t" style="right:774px;top:380.8px;line-height:18px;transform:scaleX(0.957) rotate(.03deg);transform-origin:100% 0;">PVN:</div>
<div class="f" style="left:227px;top:382px;width:60px;height:18px;"></div>
<div class="t" style="right:716px;top:380.8px;line-height:18px;transform:scaleX(0.957) rotate(.03deg);transform-origin:100% 0;">0.00</div>
<div class="t" style="right:655px;top:380.8px;line-height:18px;transform:scaleX(0.957) rotate(.03deg);transform-origin:100% 0;">Samaksai:</div>
<div class="f g" style="left:346px;top:382px;width:70px;height:18px;"></div>
<div class="t" style="right:587px;top:380.8px;line-height:18px;transform:scaleX(0.957) rotate(.03deg);transform-origin:100% 0;">25.94</div>
<div class="t" style="right:531px;top:380.8px;line-height:18px;transform:scaleX(0.957) rotate(.03deg);transform-origin:100% 0;">Apmaksai:</div>
<div class="f g" style="left:470px;top:382px;width:79px;height:18px;"></div>
<div class="t" style="right:454px;top:380.8px;line-height:18px;transform:scaleX(0.957) rotate(.03deg);transform-origin:100% 0;">25.94</div>
<div class="t" style="left:550px;top:381px;line-height:18px;transform:scaleX(0.957) rotate(.03deg);transform-origin:0 0;">EUR</div>
<div class="a" style="left:4px;top:402px;width:991px;height:2px;border-top:1px solid #a0a0a0;border-bottom:1px solid #fff;box-sizing:border-box"></div>
<div class="t" style="right:929px;top:408.3px;line-height:18px;transform:scaleX(0.957) rotate(.03deg);transform-origin:100% 0;">Darījuma vieta:</div>
<div class="f" style="left:72px;top:408px;width:89px;height:19px;"></div>
<div class="t" style="left:74px;top:406.8px;line-height:19px;transform:scaleX(0.957) rotate(.03deg);transform-origin:0 0;">Iekšzeme (I)</div>
<svg class="a" style="left:150px;top:416px" width="7" height="5" viewBox="0 0 7 5"><path d="M0.5 0.5 L3.5 4 L6.5 0.5" fill="none" stroke="#333" stroke-width="1.3"/></svg>
<div class="t" style="right:805px;top:408.3px;line-height:18px;transform:scaleX(0.957) rotate(.03deg);transform-origin:100% 0;">Līgums:</div>
<div class="f" style="left:197px;top:408px;width:89px;height:19px;"></div>
<div class="t" style="right:674px;top:408.3px;line-height:18px;transform:scaleX(0.957) rotate(.03deg);transform-origin:100% 0;">Projekts:</div>
<div class="f y" style="left:327px;top:408px;width:89px;height:19px;"></div>
<div class="t" style="left:329px;top:406.8px;line-height:19px;transform:scaleX(0.957) rotate(.03deg);transform-origin:0 0;">V</div>
<div class="t" style="right:536px;top:408.3px;line-height:18px;transform:scaleX(0.957) rotate(.03deg);transform-origin:100% 0;">Atbildīgais:</div>
<div class="f" style="left:466px;top:408px;width:89px;height:19px;"></div>
<div class="a" style="left:4px;top:429px;width:991px;height:2px;border-top:1px solid #a0a0a0;border-bottom:1px solid #fff;box-sizing:border-box"></div>
<div class="t" style="right:957px;top:435.3px;line-height:18px;transform:scaleX(0.957) rotate(.03deg);transform-origin:100% 0;">Iestāde:</div>
<div class="f y" style="left:45px;top:435px;width:72px;height:19px;"></div>
<div class="t" style="left:47px;top:433.8px;line-height:19px;transform:scaleX(0.957) rotate(.03deg);transform-origin:0 0;">HOR</div>
<div class="f g" style="left:119px;top:435px;width:459px;height:19px;"></div>
<div class="t" style="left:121px;top:433.8px;line-height:19px;transform:scaleX(0.957) rotate(.03deg);transform-origin:0 0;">Horizon</div>
<div class="a" style="left:4px;top:456px;width:991px;height:2px;border-top:1px solid #a0a0a0;border-bottom:1px solid #fff;box-sizing:border-box"></div>
<div class="f g" style="left:7px;top:463px;width:104px;height:18px;"></div>
<div class="f g" style="left:115px;top:463px;width:63px;height:18px;"></div>
<div class="t" style="left:117px;top:461.8px;line-height:18px;transform:scaleX(0.957) rotate(.03deg);transform-origin:0 0;">Izpildīts</div>
<div class="f d" style="left:181px;top:463px;width:69px;height:18px;"></div>
<div class="t dis" style="left:183px;top:462px;line-height:18px;transform:scaleX(0.957) rotate(.03deg);transform-origin:0 0;letter-spacing:.45px">06.12.2021.</div>
<div class="btn" style="left:254px;top:462px;width:19px;height:19px;"></div>
<svg class="a" style="left:257px;top:464px" width="12" height="15" viewBox="0 0 12 15"><text x="0" y="5.500" font-family="Liberation Sans, sans-serif" font-weight="bold" font-size="6" fill="#333">D</text><text x="7" y="5.500" font-family="Liberation Sans, sans-serif" font-weight="bold" font-size="6" fill="#333">K</text><path d="M1 7.500h10v3h-3.500v4h-3v-4h-3.500z" fill="#5aa8ee" stroke="#1f6fc4" stroke-width=".8"/></svg>
<div class="btn" style="left:277px;top:462px;width:19px;height:19px;"></div>
<svg class="a" style="left:279px;top:465px" width="15" height="14" viewBox="0 0 15 14"><path d="M3.500 .5h6.500l1.500 1.500v4.500h-8z" fill="#fafcfe" stroke="#aab4bf"/><path d="M.5 7.200q0-1.500 1.500-1.500h11q1.500 0 1.500 1.500v3.300h-14z" fill="#2f86dc" stroke="#1b5fa8" stroke-width=".8"/><path d="M1.500 7.300h12" stroke="#8cc6f5" stroke-width="1.200"/><path d="M.5 10h14v3q0 1-1 1h-12q-1 0-1-1z" fill="#6b7888" stroke="#4d5866" stroke-width=".8"/><path d="M2.800 11h9.400v2.500h-9.400z" fill="#e9eef3" stroke="#8b97a4" stroke-width=".6"/></svg>
<div class="cb" style="left:300px;top:465px;width:12px;height:12px;"></div>
<div class="t" style="left:316px;top:463px;line-height:18px;transform:scaleX(0.957) rotate(.03deg);transform-origin:0 0;">Čeks</div>
<div class="cb" style="left:360px;top:465px;width:12px;height:12px;border-color:#c0c0c0;background:#f6f6f6"></div>
<div class="t dis" style="left:376px;top:463px;line-height:18px;transform:scaleX(0.957) rotate(.03deg);transform-origin:0 0;">Rezervēt līdzekļus</div>
<div class="btn2" style="left:870px;top:462px;width:59px;height:19px;border-color:#3b8de4;box-shadow:inset 0 0 0 .5px #7db4ee"></div>
<div class="t" style="left:749px;width:300px;text-align:center;top:462px;line-height:19px;transform:scaleX(0.957) rotate(.03deg);transform-origin:50% 0;color:#3c3c3c">Saglabāt</div>
<div class="btn2" style="left:933px;top:462px;width:58px;height:19px;"></div>
<div class="t" style="left:812px;width:300px;text-align:center;top:462px;line-height:19px;transform:scaleX(0.957) rotate(.03deg);transform-origin:50% 0;color:#3c3c3c">Atcelt</div>
</body></html>
